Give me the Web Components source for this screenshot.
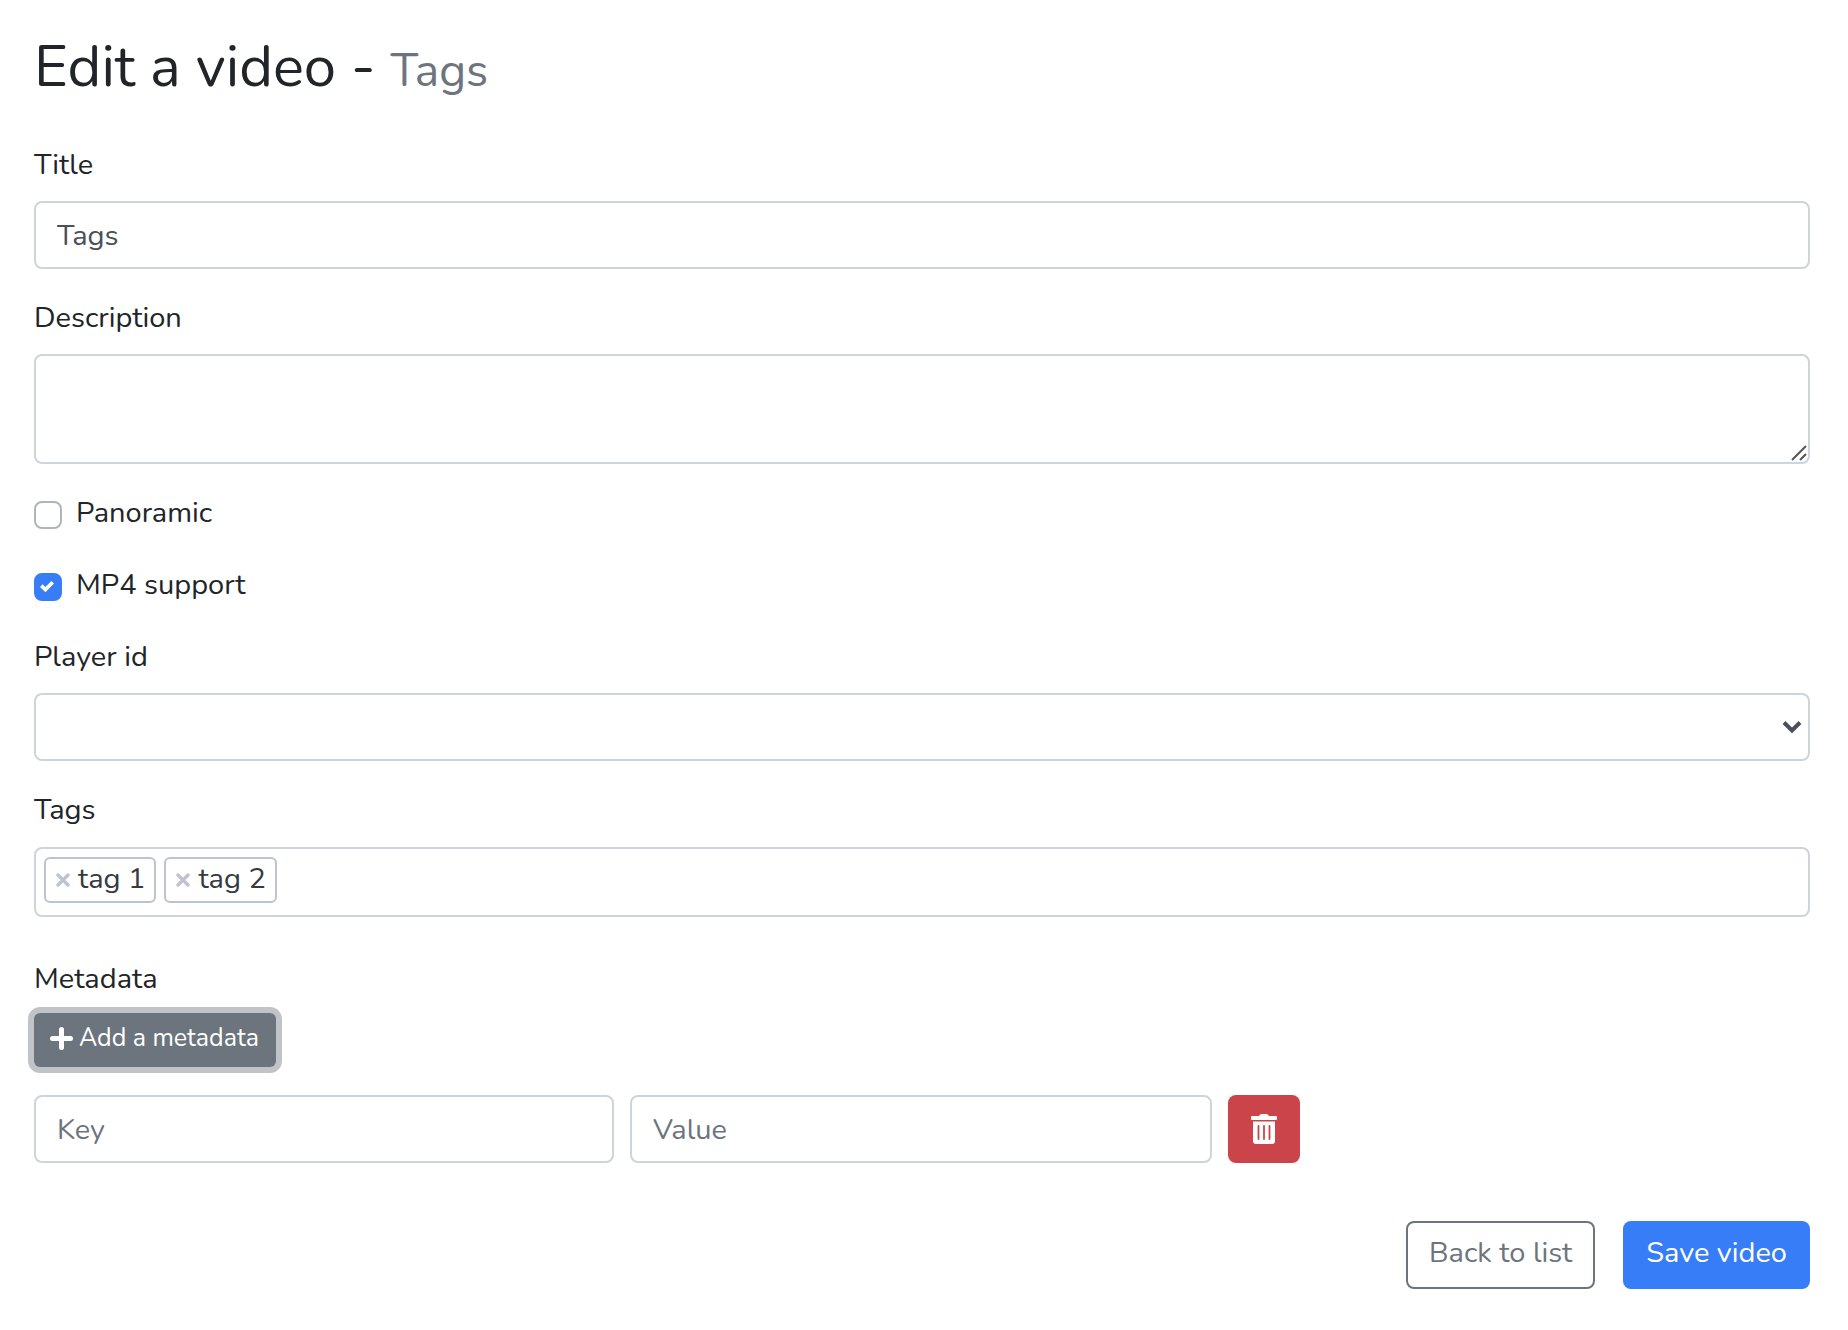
<!DOCTYPE html>
<html lang="en">
<head>
<meta charset="utf-8">
<title>Edit a video - Tags</title>
<style>
  html { background: #fff; }
  body {
    margin: 0;
    padding: 33px 38px 40px 34px;
    font-family: Nunito, Lato, "Open Sans", sans-serif;
    font-size: 29px;
    line-height: 46px;
    color: #212529;
  }
</style>
</head>
<body>
<video-editor></video-editor>
<script>
  const base = `
    *, *::before, *::after { box-sizing: border-box; }
    label { display: block; }
    input, textarea, select, button { font: inherit; margin: 0; }
    .control {
      display: block; width: 100%; min-width: 0; height: 68px;
      padding: 0 21px; border: 2px solid #ced4da; border-radius: 8px;
      background: #fff; color: #495057; appearance: none; outline: none;
    }
    .control::placeholder { color: #6c757d; opacity: 1; }
  `;

  function define(name, css, markup) {
    const template = document.createElement('template');
    template.innerHTML = `<style>${base}${css}</style>`;
    customElements.define(name, class extends HTMLElement {
      constructor() {
        super();
        this.attachShadow({ mode: 'open' }).append(template.content.cloneNode(true));
      }
      connectedCallback() {
        if (this.ready) return;
        this.ready = true;
        const body = document.createElement('template');
        body.innerHTML = markup(this);
        this.shadowRoot.append(body.content);
      }
    });
  }

  const attr = (el, name) => el.getAttribute(name) || '';

  define('page-heading', `
    :host { display: block; }
    h1 { margin: 0; font-size: 58px; line-height: 68px; font-weight: 400; }
    small { font-size: 46px; color: #6c757d; }
  `, () => `<h1><slot></slot> <small><slot name="subject"></slot></small></h1>`);

  define('text-field', `
    :host { display: flex; flex-direction: column; gap: 13px; }
  `, el => `<label for="control">${attr(el, 'label')}</label>
    <input class="control" id="control" type="text" value="${attr(el, 'value')}">`);

  define('text-area-field', `
    :host { display: flex; flex-direction: column; gap: 13px; }
    .wrap { display: grid; }
    .wrap > * { grid-area: 1 / 1; }
    textarea.control { height: 110px; padding: 10px 21px; resize: none; }
    svg { place-self: end; margin: 0 3px 3px 0; pointer-events: none; }
  `, el => `<label for="control">${attr(el, 'label')}</label>
    <div class="wrap"><textarea class="control" id="control"></textarea>
    <svg width="16" height="16" viewBox="0 0 16 16" fill="none" stroke="#555" stroke-width="2" aria-hidden="true"><path d="M1 15 15 1M9 15l6-6"/></svg></div>`);

  define('select-field', `
    :host { display: flex; flex-direction: column; gap: 13px; }
    .wrap { display: grid; }
    .wrap > * { grid-area: 1 / 1; }
    svg { place-self: center end; margin-right: 8px; pointer-events: none; }
  `, el => `<label for="control">${attr(el, 'label')}</label>
    <div class="wrap"><select class="control" id="control"><option></option></select>
    <svg width="20" height="14" viewBox="0 0 20 14" fill="none" stroke="#495057" stroke-width="4" aria-hidden="true"><path d="M2 2.5 10 10.5 18 2.5"/></svg></div>`);

  define('check-field', `
    :host { display: flex; }
    label { display: flex; align-items: center; gap: 14px; }
    .box { display: grid; padding-top: 4px; }
    .box > * { grid-area: 1 / 1; }
    input { appearance: none; width: 28px; height: 28px; border: 2px solid #adb5bd; border-radius: 8px; background: #fff; }
    input:checked { background: #377df8; border-color: #377df8; }
    svg { place-self: center; pointer-events: none; visibility: hidden; }
    input:checked + svg { visibility: visible; }
  `, el => `<label><span class="box"><input type="checkbox" ${el.hasAttribute('checked') ? 'checked' : ''}>
    <svg width="28" height="28" viewBox="0 0 28 28" fill="none" stroke="#fff" stroke-width="3.6" aria-hidden="true"><path d="M7.3 12.6 11.4 16.6 18.7 9.2"/></svg></span><slot></slot></label>`);

  define('tag-chip', `
    :host { display: flex; align-items: center; gap: 8px; height: 46px; padding: 0 9px 0 10px; border: 2px solid #bdc3d1; border-radius: 6px; color: #343a40; line-height: 42px; }
    button { display: flex; padding: 0; border: 0; background: none; color: #bdc3d1; }
    span { padding-bottom: 2px; }
  `, () => `<button type="button" aria-label="Remove"><svg width="14" height="14" viewBox="0 0 14 14" fill="none" stroke="currentColor" stroke-width="3.400" stroke-linecap="round" aria-hidden="true"><path d="M2 2l10 10M12 2 2 12"/></svg></button><span><slot></slot></span>`);

  define('tags-field', `
    :host { display: flex; flex-direction: column; gap: 14px; }
    .box { display: flex; align-items: flex-start; gap: 8px; height: 70px; padding: 8px; border: 2px solid #ced4da; border-radius: 8px; }
    input { flex: 1; min-width: 0; height: 46px; padding: 0; border: 0; outline: 0; background: none; color: inherit; }
  `, el => `<label for="control">${attr(el, 'label')}</label>
    <div class="box"><slot></slot><input id="control" type="text"></div>`);

  define('action-button', `
    :host { display: block; }
    button { display: flex; align-items: center; justify-content: center; width: 100%; height: 68px; padding: 0 21px 4px; border: 2px solid transparent; border-radius: 8px; white-space: nowrap; }
    :host([kind="outline"]) button { background: #fff; border-color: #6c757d; color: #6c757d; }
    :host([kind="primary"]) button { background: #377df8; color: #fff; }
    :host([kind="danger"]) button { background: #cb444a; color: #fff; padding: 0; }
    :host([kind="small"]) button { height: 54px; gap: 6px; padding: 0 15px 4px 14px; border-radius: 6px; background: #6c757d; color: #fff; font-size: 25px; box-shadow: 0 0 0 6px #c0c4c8; }
  `, el => `<button type="button" aria-label="${attr(el, 'label')}"><slot></slot></button>`);

  define('metadata-row', `
    :host { display: grid; grid-template-columns: 580fr 582fr 72fr 494fr; column-gap: 16px; }
  `, () => `<input class="control" type="text" placeholder="Key" aria-label="Key">
    <input class="control" type="text" placeholder="Value" aria-label="Value">
    <action-button kind="danger" label="Delete"><svg width="26" height="30" viewBox="0 0 26 30" aria-hidden="true"><path fill="#fff" d="M1 2h7l1.300-1.500Q9.700 0 10.500 0h5q.8 0 1.200.5L18 2h7q1 0 1 1v2q0 1-1 1H1Q0 6 0 5V3Q0 2 1 2ZM2 7.500h22V27q0 3-3 3H5q-3 0-3-3Z"/><path d="M7.500 12v13M13 12v13M18.500 12v13" stroke="#cb444a" stroke-width="1.800" stroke-linecap="round"/></svg></action-button>`);

  define('video-editor', `
    :host, form, section { display: flex; flex-direction: column; }
    :host { gap: 37px; }
    form { gap: 26px; }
    section { gap: 11px; padding-top: 13px; }
    .add { display: flex; padding-bottom: 17px; }
    .actions { display: flex; justify-content: flex-end; gap: 28px; padding-top: 32px; }
  `, () => `
    <page-heading>Edit a video - <span slot="subject">Tags</span></page-heading>
    <form>
      <text-field label="Title" value="Tags"></text-field>
      <text-area-field label="Description"></text-area-field>
      <check-field>Panoramic</check-field>
      <check-field checked>MP4 support</check-field>
      <select-field label="Player id"></select-field>
      <tags-field label="Tags"><tag-chip>tag 1</tag-chip><tag-chip>tag 2</tag-chip></tags-field>
      <section>
        <div>Metadata</div>
        <div class="add"><action-button kind="small" label="Add a metadata"><svg width="23" height="23" viewBox="0 0 23 23" fill="none" stroke="#fff" stroke-width="5" stroke-linecap="round" aria-hidden="true"><path d="M11.500 2.500v18M2.500 11.500h18"/></svg>Add a metadata</action-button></div>
        <metadata-row></metadata-row>
      </section>
      <div class="actions">
        <action-button kind="outline" label="Back to list">Back to list</action-button>
        <action-button kind="primary" label="Save video">Save video</action-button>
      </div>
    </form>`);
</script>
</body>
</html>
